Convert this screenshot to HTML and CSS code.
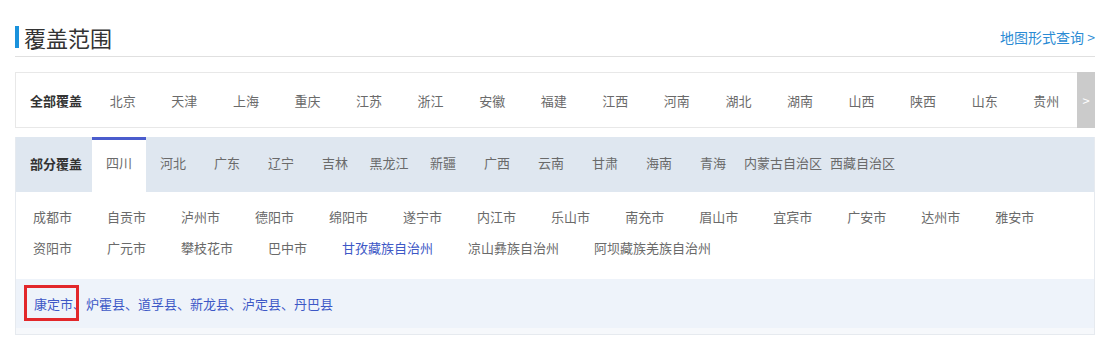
FILE: index.html
```html
<!DOCTYPE html>
<html lang="zh">
<head>
<meta charset="utf-8">
<title>覆盖范围</title>
<link rel="stylesheet" href="styles.css">
</head>
<body>
<div class="page">
  <div class="head">
    <h1 class="title">覆盖范围</h1>
    <a class="maplink" href="#">地图形式查询 &gt;</a>
  </div>

  <div class="allrow">
    <div class="allbox">
      <span class="label">全部覆盖</span>
      <span class="prov">北京</span><span class="prov">天津</span><span class="prov">上海</span><span class="prov">重庆</span>
      <span class="prov">江苏</span><span class="prov">浙江</span><span class="prov">安徽</span><span class="prov">福建</span>
      <span class="prov">江西</span><span class="prov">河南</span><span class="prov">湖北</span><span class="prov">湖南</span>
      <span class="prov">山西</span><span class="prov">陕西</span><span class="prov">山东</span><span class="prov">贵州</span>
    </div>
    <div class="arrow">&gt;</div>
  </div>

  <div class="partbox">
    <div class="tabs">
      <span class="label">部分覆盖</span>
      <span class="tab active">四川</span><span class="tab">河北</span><span class="tab">广东</span><span class="tab">辽宁</span>
      <span class="tab">吉林</span><span class="tab">黑龙江</span><span class="tab">新疆</span><span class="tab">广西</span>
      <span class="tab">云南</span><span class="tab">甘肃</span><span class="tab">海南</span><span class="tab">青海</span>
      <span class="tab">内蒙古自治区</span><span class="tab">西藏自治区</span>
    </div>
    <div class="cities">
      <span class="city">成都市</span><span class="city">自贡市</span><span class="city">泸州市</span><span class="city">德阳市</span>
      <span class="city">绵阳市</span><span class="city">遂宁市</span><span class="city">内江市</span><span class="city">乐山市</span>
      <span class="city">南充市</span><span class="city">眉山市</span><span class="city">宜宾市</span><span class="city">广安市</span>
      <span class="city">达州市</span><span class="city">雅安市</span><span class="city">资阳市</span><span class="city">广元市</span>
      <span class="city">攀枝花市</span><span class="city">巴中市</span><span class="city selected">甘孜藏族自治州</span>
      <span class="city">凉山彝族自治州</span><span class="city">阿坝藏族羌族自治州</span>
    </div>
    <div class="counties">
      <span class="mark">康定市</span>、炉霍县、道孚县、新龙县、泸定县、丹巴县
    </div>
  </div>
</div>
</body>
</html>
```

FILE: styles.css
```css
* { box-sizing: border-box; }
html, body { margin: 0; padding: 0; background: #fff; }
body {
  font-family: "Noto Sans CJK SC", "Noto Sans", sans-serif;
  font-size: 13px;
  color: #6a6a6a;
}
.page {
  width: 1080px;
  margin-left: 15px;
}
.head {
  display: flex;
  justify-content: space-between;
  align-items: flex-start;
  height: 57px;
  padding-top: 17px;
  border-bottom: 1px solid #e0e0e0;
}
.title {
  margin: 0;
  margin-top: 9px;
  font-size: 22px;
  font-weight: normal;
  color: #333;
  line-height: 30px;
  border-left: 4px solid #1a92dc;
  padding-left: 5px;
  height: 22px;
  display: flex;
  align-items: center;
}
.maplink {
  color: #2b8bd4;
  text-decoration: none;
  font-size: 14px;
  line-height: 20px;
  margin-top: 10px;
}
.allrow {
  display: flex;
  margin-top: 15px;
  height: 56px;
}
.allbox {
  flex: 1;
  display: flex;
  align-items: center;
  border: 1px solid #e8e8e8;
  border-right: none;
}
.label {
  width: 76px;
  flex: none;
  padding-left: 14px;
  font-weight: bold;
  color: #333;
}
.prov {
  flex: 1;
  text-align: center;
}
.arrow {
  width: 18px;
  flex: none;
  background: #cbcbcb;
  color: #fff;
  display: flex;
  align-items: center;
  justify-content: center;
  font-size: 13px;
}
.partbox {
  margin-top: 9px;
  border: 1px solid #e6eaef;
  border-top: none;
  padding-bottom: 6px;
  background: #f6f8fb;
}
.tabs {
  display: flex;
  align-items: stretch;
  height: 55px;
  background: #dfe7f0;
}
.tabs .label {
  display: flex;
  align-items: center;
  padding-bottom: 3px;
}
.tab {
  min-width: 46px;
  padding: 0 4px 3px;
  box-sizing: content-box;
  text-align: center;
  line-height: 52px;
}
.tab.active {
  background: #fff;
  border-top: 3px solid #4a5ccd;
  line-height: 46px;
  padding-bottom: 6px;
}
.cities {
  background: #fff;
  display: flex;
  flex-wrap: wrap;
  column-gap: 35px;
  padding: 9px 20px 16px 17px;
  line-height: 31px;
}
.city.selected { color: #3d58c6; }
.counties {
  background: #eef3fa;
  height: 49px;
  display: flex;
  align-items: center;
  padding-left: 18px;
  color: #3d58c6;
}
.mark {
  position: relative;
}
.mark::after {
  content: "";
  position: absolute;
  left: -10px;
  right: -6px;
  top: -9px;
  bottom: -8px;
  border: 3px solid #e2272a;
}
```
